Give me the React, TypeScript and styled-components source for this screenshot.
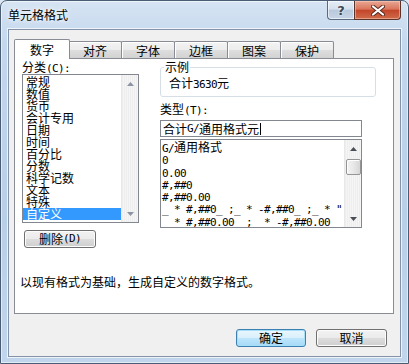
import React from "react";
import styled, { createGlobalStyle } from "styled-components";

const Global = createGlobalStyle`
  html, body { margin: 0; padding: 0; background: #dbe7f4; }
  body { font-family: "Noto Sans CJK SC", "Noto Sans", sans-serif; font-size: 12px; color: #000; }
  * { box-sizing: border-box; }
`;

const Latin = styled.span`
  font-family: "DejaVu Sans Mono", "Liberation Mono", monospace;
  font-size: 11px;
  letter-spacing: -0.62px;
  white-space: pre;
`;

const mixed = (s: string) =>
  s
    .split(/([\x20-\x7e]+)/)
    .filter(Boolean)
    .map((part, i) =>
      /^[\x20-\x7e]+$/.test(part) ? (
        <Latin key={i}>{part}</Latin>
      ) : (
        <React.Fragment key={i}>{part}</React.Fragment>
      )
    );

const Window = styled.div`
  width: 409px;
  height: 364px;
  border: 1px solid #4a5d74;
  border-radius: 7px 7px 0 0;
  background: linear-gradient(180deg, #d6e4f3 0%, #c3d7ed 12%, #b8cfe8 60%, #c1d6ec 100%);
  box-shadow: inset 0 0 0 1px rgba(255, 255, 255, 0.55);
  display: flex;
  flex-direction: column;
  overflow: hidden;
`;

const TitleBar = styled.div`
  height: 28px;
  display: flex;
  align-items: flex-start;
  padding: 0 7px 0 7px;
`;

const Title = styled.div`
  margin-top: 6px;
  font-size: 12px;
  line-height: 16px;
  color: #000;
  text-shadow: 0 0 6px #fff, 0 0 3px #fff;
`;

const Caption = styled.div`
  margin-left: auto;
  display: flex;
`;

const HelpBtn = styled.div`
  width: 27px;
  height: 19px;
  border: 1px solid #5a6b80;
  border-top: none;
  border-right: none;
  border-radius: 0 0 0 4px;
  background: linear-gradient(180deg, #e6eef7 0%, #d4e0ed 45%, #b8c9dc 50%, #c6d5e6 100%);
  box-shadow: inset 0 0 0 1px rgba(255, 255, 255, 0.6);
  display: flex;
  align-items: center;
  justify-content: center;
  font-family: "DejaVu Sans", sans-serif;
  font-weight: bold;
  font-size: 13px;
  color: #3b4654;
  text-shadow: 0 0 2px #fff, 0 0 1px #fff;
`;

const CloseBtn = styled.div`
  width: 47px;
  height: 19px;
  border: 1px solid #5a3329;
  border-top: none;
  border-radius: 0 0 4px 0;
  background: linear-gradient(180deg, #e9a895 0%, #d9765c 45%, #c4462a 52%, #cf6a4a 100%);
  box-shadow: inset 0 0 0 1px rgba(255, 210, 190, 0.5);
  display: flex;
  align-items: center;
  justify-content: center;
`;

const Client = styled.div`
  flex: 1;
  margin: 0 7px 6px 7px;
  border: 1px solid #8394aa;
  box-shadow: 0 0 0 1px rgba(255, 255, 255, 0.7);
  background: #f0f0f0;
  display: flex;
  flex-direction: column;
  padding: 9px 6px 0 5px;
`;

const TabRow = styled.div`
  display: flex;
  align-items: flex-end;
  height: 20px;
  margin-bottom: -1px;
`;

const Tab = styled.div<{ $active?: boolean }>`
  width: ${(p) => (p.$active ? 56 : 54)}px;
  height: ${(p) => (p.$active ? 20 : 17)}px;
  margin-bottom: ${(p) => (p.$active ? 0 : 1)}px;
  margin-left: ${(p) => (p.$active ? 0 : -1)}px;
  border: 1px solid #898c95;
  border-bottom: none;
  border-radius: 2px 2px 0 0;
  background: ${(p) =>
    p.$active
      ? "#fff"
      : "linear-gradient(180deg, #f3f3f3 0%, #ececec 50%, #dedede 50%, #d2d2d2 100%)"};
  box-shadow: ${(p) => (p.$active ? "none" : "inset 1px 1px 0 #fff")};
  display: flex;
  align-items: center;
  justify-content: center;
  line-height: 12px;
  padding-top: ${(p) => (p.$active ? 0 : 1)}px;
  position: ${(p) => (p.$active ? "relative" : "static")};
  z-index: ${(p) => (p.$active ? 1 : 0)};
  &:first-child { margin-left: 0; }
  &:nth-child(2) { margin-left: -2px; }
`;

const Panel = styled.div`
  width: 380px;
  height: 256px;
  border: 1px solid #898c95;
  background: #fff;
  padding: 2px 0 0 7px;
  display: flex;
  flex-direction: column;
`;

const Top = styled.div`
  display: flex;
`;

const LeftCol = styled.div`
  width: 138px;
  display: flex;
  flex-direction: column;
`;

const RightCol = styled.div`
  width: 216px;
  display: flex;
  flex-direction: column;
`;

const Label = styled.div`
  line-height: 12px;
  height: 13px;
`;

const ListBox = styled.div<{ $w: number; $h: number }>`
  width: ${(p) => p.$w}px;
  height: ${(p) => p.$h}px;
  border: 1px solid #828790;
  background: #fff;
  display: flex;
  overflow: hidden;
`;

const Items = styled.div<{ $pl: number }>`
  flex: 1;
  padding-top: 1px;
  overflow: hidden;
  white-space: nowrap;
  & > div { padding-left: ${(p) => p.$pl}px; }
`;

const Item = styled.div<{ $sel?: boolean; $lh?: number }>`
  height: ${(p) => p.$lh ?? 12}px;
  line-height: ${(p) => p.$lh ?? 12}px;
  background: ${(p) => (p.$sel ? "#3399ff" : "transparent")};
  color: ${(p) => (p.$sel ? "#fff" : "#000")};
`;

const Scroll = styled.div`
  width: 17px;
  display: flex;
  flex-direction: column;
  background: repeating-linear-gradient(90deg, #eeeeee 0px, #eeeeee 1px, #f5f5f5 1px, #f5f5f5 2px);
  border-left: 1px solid #e8e8e8;
`;

const Arrow = styled.div`
  height: 17px;
  display: flex;
  align-items: center;
  justify-content: center;
`;

const Track = styled.div`
  flex: 1;
  display: flex;
  flex-direction: column;
  align-items: center;
`;

const Thumb = styled.div`
  margin-top: 2px;
  width: 15px;
  height: 16px;
  border: 1px solid #959595;
  border-radius: 2px;
  background: linear-gradient(90deg, #f3f3f3 0%, #e8e8e8 50%, #d6d6d6 100%);
  box-shadow: inset 1px 1px 0 #fff;
`;

const Button = styled.div<{ $w: number; $default?: boolean }>`
  width: ${(p) => p.$w}px;
  height: 18px;
  border: 1px solid ${(p) => (p.$default ? "#3c7fb1" : "#707070")};
  border-radius: 3px;
  background: ${(p) =>
    p.$default
      ? "linear-gradient(180deg, #eaf6fd 0%, #d9f0fc 50%, #bee6fd 50%, #a7d9f5 100%)"
      : "linear-gradient(180deg, #f2f2f2 0%, #ebebeb 50%, #dddddd 50%, #cfcfcf 100%)"};
  box-shadow: inset 0 0 0 1px ${(p) => (p.$default ? "#a6e0f8" : "#fcfcfc")};
  display: flex;
  align-items: center;
  justify-content: center;
  line-height: 12px;
`;

const DeleteBtn = styled(Button)`
  margin: 7px 0 0 2px;
  background: linear-gradient(180deg, #f2f2f2 0%, #ebebeb 50%, #dddddd 50%, #cfcfcf 100%);
`;

const Group = styled.fieldset`
  margin: 0;
  width: 216px;
  min-width: 0;
  border: 1px solid #d5dfe5;
  border-radius: 3px;
  padding: 0 8px 5px 3px;
  box-shadow: inset 1px 1px 0 #fff;
`;

const Legend = styled.legend`
  padding: 0 1px;
  line-height: 12px;
  font-size: 12px;
`;

const Sample = styled.div`
  margin: 4px 0 0 5px;
  line-height: 12px;
`;

const TypeLabel = styled(Label)`
  margin-top: 6px;
`;

const Input = styled.div`
  margin-top: 4px;
  width: 202px;
  height: 17px;
  border: 1px solid #828790;
  padding-left: 2px;
  line-height: 15px;
  display: flex;
  align-items: center;
`;

const Caret = styled.span`
  display: inline-block;
  width: 1px;
  height: 12px;
  background: #000;
  margin-left: 1px;
`;

const TypeList = styled(ListBox)`
  margin-top: 2px;
`;

const Desc = styled.div`
  margin: 28px 0 0 -2px;
  line-height: 12px;
`;

const ButtonRow = styled.div`
  display: flex;
  justify-content: flex-end;
  gap: 10px;
  margin: 15px 7px 0 0;
`;

const UpArrow = ({ c }: { c: string }) => (
  <svg width="7" height="4" viewBox="0 0 7 4">
    <polygon points="0,4 3.5,0 7,4" fill={c} />
  </svg>
);
const DownArrow = ({ c }: { c: string }) => (
  <svg width="7" height="4" viewBox="0 0 7 4">
    <polygon points="0,0 7,0 3.5,4" fill={c} />
  </svg>
);

const ScrollBar = ({ thumb, color }: { thumb?: boolean; color: string }) => (
  <Scroll>
    <Arrow>
      <UpArrow c={color} />
    </Arrow>
    <Track>{thumb && <Thumb />}</Track>
    <Arrow>
      <DownArrow c={color} />
    </Arrow>
  </Scroll>
);

const categories = ["常规", "数值", "货币", "会计专用", "日期", "时间", "百分比", "分数", "科学记数", "文本", "特殊", "自定义"];
const types = [
  "G/通用格式",
  "0",
  "0.00",
  "#,##0",
  "#,##0.00",
  '_ * #,##0_ ;_ * -#,##0_ ;_ * "',
  "_ * #,##0.00_ ;_ * -#,##0.00_ ;_ * ",
];
const tabs = ["数字", "对齐", "字体", "边框", "图案", "保护"];

export default function App() {
  return (
    <>
      <Global />
      <Window>
        <TitleBar>
          <Title>单元格格式</Title>
          <Caption>
            <HelpBtn>?</HelpBtn>
            <CloseBtn>
              <svg width="14" height="11" viewBox="0 0 14 11">
                <path d="M2 1.5 L12 9.5 M12 1.5 L2 9.5" stroke="#5a2a1e" strokeWidth="4" strokeLinecap="round" />
                <path d="M2 1.5 L12 9.5 M12 1.5 L2 9.5" stroke="#fff" strokeWidth="2.2" strokeLinecap="round" />
              </svg>
            </CloseBtn>
          </Caption>
        </TitleBar>
        <Client>
          <TabRow>
            {tabs.map((t, i) => (
              <Tab key={t} $active={i === 0}>
                {t}
              </Tab>
            ))}
          </TabRow>
          <Panel>
            <Top>
              <LeftCol>
                <Label>{mixed("分类(C):")}</Label>
                <ListBox $w={117} $h={149}>
                  <Items $pl={3}>
                    {categories.map((c, i) => (
                      <Item key={c} $sel={i === categories.length - 1}>
                        {c}
                      </Item>
                    ))}
                  </Items>
                  <ScrollBar color="#8a94a3" />
                </ListBox>
                <DeleteBtn $w={72}>{mixed("删除(D)")}</DeleteBtn>
              </LeftCol>
              <RightCol>
                <Group>
                  <Legend>示例</Legend>
                  <Sample>{mixed("合计3630元")}</Sample>
                </Group>
                <TypeLabel>{mixed("类型(T):")}</TypeLabel>
                <Input>
                  {mixed("合计G/通用格式元")}
                  <Caret />
                </Input>
                <TypeList $w={202} $h={89}>
                  <Items $pl={1}>
                    {types.map((t) => (
                      <Item key={t} $lh={12.3}>
                        {mixed(t)}
                      </Item>
                    ))}
                  </Items>
                  <ScrollBar thumb color="#4a4f57" />
                </TypeList>
              </RightCol>
            </Top>
            <Desc>以现有格式为基础，生成自定义的数字格式。</Desc>
          </Panel>
          <ButtonRow>
            <Button $w={70} $default>
              确定
            </Button>
            <Button $w={71}>取消</Button>
          </ButtonRow>
        </Client>
      </Window>
    </>
  );
}
